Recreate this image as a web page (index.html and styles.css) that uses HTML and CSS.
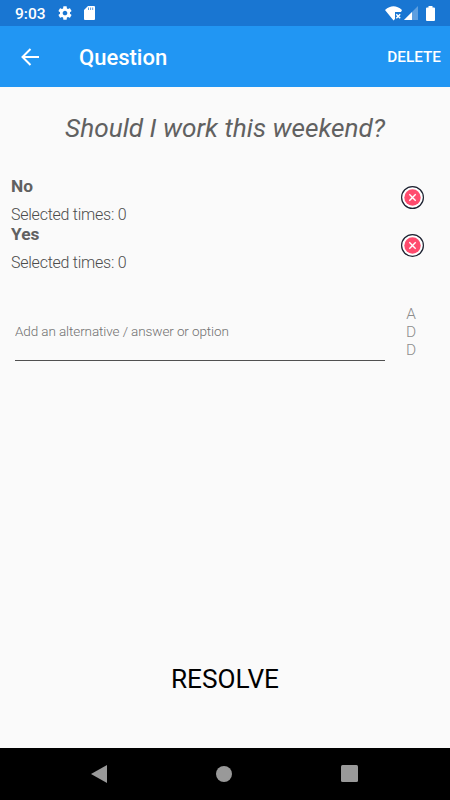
FILE: index.html
```
<!DOCTYPE html>
<html lang="en">
<head>
  <meta charset="UTF-8">
  <meta name="viewport" content="width=device-width, initial-scale=1.0">
  <title>Question</title>
  <link rel="stylesheet" href="styles.css">
</head>
<body>
  <div class="screen">
    <!-- Status bar -->
    <div class="status-bar">
      <span class="clock">9:03</span>
      <svg class="gear-icon" width="16" height="16" viewBox="0 0 24 24"><path fill="#fff" d="M19.43 12.98c.04-.32.07-.64.07-.98s-.03-.66-.07-.98l2.11-1.65c.19-.15.24-.42.12-.64l-2-3.46c-.12-.22-.39-.3-.61-.22l-2.49 1c-.52-.4-1.08-.73-1.69-.98l-.38-2.65C14.46 2.18 14.25 2 14 2h-4c-.25 0-.46.18-.49.42l-.38 2.65c-.61.25-1.17.59-1.69.98l-2.49-1c-.23-.09-.49 0-.61.22l-2 3.46c-.13.22-.07.49.12.64l2.11 1.65c-.04.32-.07.65-.07.98s.03.66.07.98l-2.11 1.65c-.19.15-.24.42-.12.64l2 3.46c.12.22.39.3.61.22l2.49-1c.52.4 1.08.73 1.69.98l.38 2.65c.03.24.24.42.49.42h4c.25 0 .46-.18.49-.42l.38-2.65c.61-.25 1.17-.59 1.69-.98l2.49 1c.23.09.49 0 .61-.22l2-3.46c.12-.22.07-.49-.12-.64l-2.11-1.65zM12 15.5c-1.93 0-3.5-1.57-3.5-3.5s1.57-3.5 3.5-3.5 3.5 1.57 3.5 3.5-1.57 3.5-3.5 3.5z"/></svg>
      <svg class="card-icon" width="11" height="14" viewBox="0 0 11 14"><path fill="#fff" d="M4 0h6q1 0 1 1v12q0 1-1 1H1q-1 0-1-1V4z"/><path stroke="#1976d2" stroke-width=".7" d="M4.500 1.500v2.500M6.600 1.500v2.500M8.700 1.500v2.500"/></svg>
      <div class="status-right">
        <svg width="18" height="15" viewBox="0 0 18 15"><path fill="#fff" d="M0 4Q8.500-3.500 17 4L16 6H10v7L8.500 14.500z"/><path stroke="#fff" stroke-width="1.500" d="M11.300 8.300l3.900 3.900M15.200 8.300l-3.900 3.900"/></svg>
        <svg class="signal-icon" width="14" height="14" viewBox="0 0 14 14"><path fill="#5e9fe0" d="M14 0v14H0z"/><path fill="#fff" d="M8 6v8H0z"/></svg>
        <svg class="battery-icon" width="9" height="15" viewBox="0 0 9 15"><path fill="#fff" d="M2.500 0h4v1.500H8q1 0 1 1V14q0 1-1 1H1q-1 0-1-1V2.500q0-1 1-1h1.500z"/></svg>
      </div>
    </div>

    <!-- App bar -->
    <header class="app-bar">
      <svg class="back-icon" width="18" height="18" viewBox="0 0 18 18" fill="none" stroke="#fff" stroke-width="2"><path d="M18 9H2M9.500 1L1.500 9l8 8"/></svg>
      <h1 class="title">Question</h1>
      <button type="button" class="delete-btn">DELETE</button>
    </header>

    <main class="content">
      <h2 class="question">Should I work this weekend?</h2>

      <!-- Alternatives -->
      <ul class="options">
        <li class="option">
          <div>
            <div class="option-name">No</div>
            <div class="option-count">Selected times: 0</div>
          </div>
          <svg class="remove-icon" width="24" height="24" viewBox="0 0 24 24"><circle cx="11.500" cy="11.500" r="10.900" fill="#fff" stroke="#1c2130" stroke-width="1.200"/><circle cx="11.500" cy="11.500" r="8.200" fill="#ff4b6e"/><path stroke="#fff" stroke-width="1.400" d="M8.300 8.300l6.400 6.400M14.700 8.300l-6.400 6.400"/></svg>
        </li>
        <li class="option">
          <div>
            <div class="option-name">Yes</div>
            <div class="option-count">Selected times: 0</div>
          </div>
          <svg class="remove-icon" width="24" height="24" viewBox="0 0 24 24"><circle cx="11.500" cy="11.500" r="10.900" fill="#fff" stroke="#1c2130" stroke-width="1.200"/><circle cx="11.500" cy="11.500" r="8.200" fill="#ff4b6e"/><path stroke="#fff" stroke-width="1.400" d="M8.300 8.300l6.400 6.400M14.700 8.300l-6.400 6.400"/></svg>
        </li>
      </ul>

      <!-- Add new alternative -->
      <form class="add-form">
        <input type="text" class="add-input" placeholder="Add an alternative / answer or option">
        <button type="button" class="add-btn">A<br>D<br>D</button>
      </form>

      <button type="button" class="resolve-btn">RESOLVE</button>
    </main>

    <!-- System navigation -->
    <nav class="nav-bar">
      <svg width="16" height="18" viewBox="0 0 16 18"><path fill="#999" d="M16 0v18L0 9z"/></svg>
      <svg width="16" height="16" viewBox="0 0 16 16"><circle cx="8" cy="8" r="8" fill="#999"/></svg>
      <svg width="17" height="17" viewBox="0 0 17 17"><rect width="17" height="17" rx="1.500" fill="#999"/></svg>
    </nav>
  </div>
</body>
</html>
```
FILE: styles.css
```
* {
  box-sizing: border-box;
}

body {
  margin: 0;
  background-color: #fafafa;
  font-family: Roboto, sans-serif;
}

h1, h2, ul {
  margin: 0;
  padding: 0;
}

button {
  padding: 0;
  border: none;
  background: none;
  font-family: inherit;
  cursor: pointer;
}

svg {
  display: block;
  flex-shrink: 0;
}

.screen {
  display: flex;
  flex-direction: column;
  width: 450px;
  height: 800px;
  overflow: hidden;
}

.status-bar {
  display: flex;
  align-items: center;
  height: 26px;
  padding: 0 15px 0 15px;
  background-color: #1976d2;
  color: #fff;
}

.clock {
  width: 42px;
  padding-top: 2px;
  font-size: 15.5px;
  font-weight: 500;
  line-height: 26px;
}

.card-icon {
  margin-left: 11px;
}

.status-right {
  display: flex;
  align-items: center;
  margin-left: auto;
}

.signal-icon {
  margin-left: 1px;
}

.battery-icon {
  margin-left: 8px;
}

.app-bar {
  display: flex;
  align-items: center;
  height: 61px;
  padding: 0 9px 0 21px;
  background-color: #2196f3;
  color: #fff;
}

.title {
  margin-left: 40px;
  padding-top: 2px;
  font-size: 22px;
  font-weight: 500;
}

.delete-btn {
  margin-left: auto;
  padding-top: 1px;
  color: #fff;
  font-size: 15.3px;
  font-weight: 500;
}

.content {
  display: flex;
  flex: 1;
  flex-direction: column;
  padding: 24px 11px 0;
  color: #616161;
}

.question {
  font-size: 26.2px;
  font-style: italic;
  font-weight: 400;
  line-height: 34px;
  text-align: center;
}

.options {
  margin-top: 31px;
  list-style: none;
}

.option {
  display: flex;
  align-items: center;
  justify-content: space-between;
  height: 48px;
  padding-right: 14px;
}

.option-name {
  font-size: 17.3px;
  font-weight: 700;
  line-height: 20px;
}

.option-count {
  padding-top: 9px;
  color: #4c4c4c;
  font-size: 16px;
  font-weight: 300;
  letter-spacing: -0.25px;
  line-height: 19px;
}

.remove-icon {
  margin-bottom: 5px;
}

.add-form {
  display: flex;
  align-items: flex-start;
  margin-top: 32px;
}

.add-input {
  width: 370px;
  height: 57px;
  margin-left: 4px;
  padding: 0 0 3px;
  border: none;
  border-bottom: 1px solid #505050;
  background: none;
  font-family: inherit;
  font-size: 13.5px;
  font-weight: 300;
  letter-spacing: -0.1px;
  outline: none;
}

.add-input::placeholder {
  color: #707070;
}

.add-btn {
  width: 52px;
  padding-top: 1px;
  color: #8c8c8c;
  font-size: 15.5px;
  font-weight: 300;
  line-height: 18px;
}

.resolve-btn {
  margin-top: auto;
  margin-bottom: 52px;
  color: #000;
  font-size: 26.2px;
  line-height: 34px;
}

.nav-bar {
  display: flex;
  align-items: center;
  justify-content: space-between;
  height: 52px;
  padding: 0 92px 1px 91px;
  background-color: #000;
}
```
